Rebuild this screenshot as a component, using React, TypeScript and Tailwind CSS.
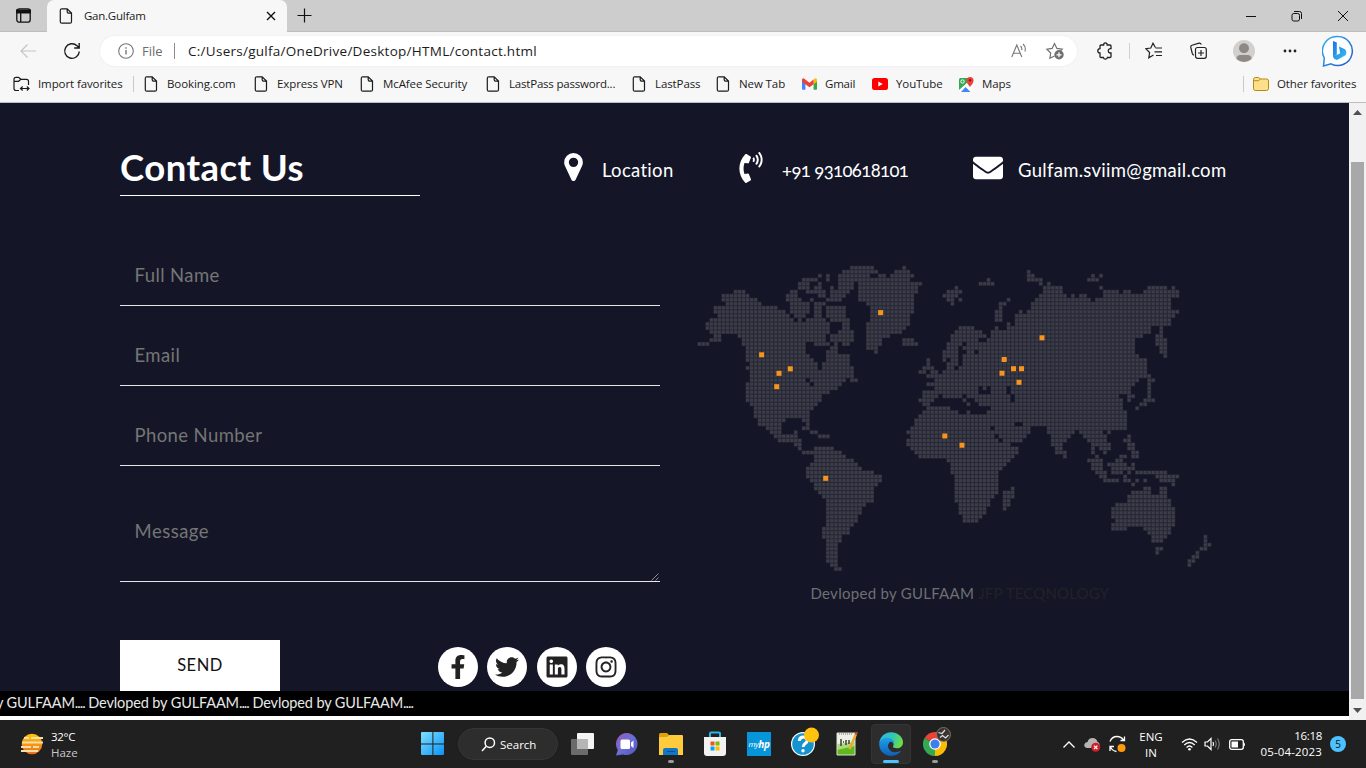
import React from "react";
import { FaFacebookF, FaTwitter, FaLinkedin, FaInstagram, FaPhoneVolume, FaEnvelope } from "react-icons/fa";

const UI = "font-['Open_Sans','Noto_Sans',sans-serif]";

// Land runs per map row: first and last dot of every run.
const LAND: string[] = [
  "485-547 643-643",
  "461-558 620-655 1016-1016",
  "390-390 414-414 450-535 570-582 607-665 1016-1028 1209-1209 1233-1233",
  "342-378 414-414 450-655 896-896 1016-1052 1195-1221",
  "330-354 390-390 450-485 509-690 872-908 1052-1052 1077-1077",
  "330-354 378-390 426-426 450-485 509-680 799-799 1065-1115 1233-1233 1375-1430 1450-1450",
  "135-163 306-318 354-402 426-473 509-680 775-811 1065-1115 1245-1284 1305-1320 1365-1432 1450-1465",
  "100-178 295-318 390-402 426-461 509-668 763-799 1052-1128 1149-1149 1172-1187 1245-1432 1450-1465",
  "100-200 295-330 366-366 414-450 509-668 775-787 811-811 956-956 1040-1197 1221-1440",
  "111-212 306-354 378-402 533-668 787-787 933-945 1028-1440",
  "76-260 306-354 378-390 414-461 545-668 933-933 1028-1440",
  "76-283 306-354 378-390 414-461 545-668 921-933 992-992 1016-1440 1450-1462",
  "88-295 318-342 378-390 414-467 545-655 921-933 980-1440 1450-1450",
  "64-306 330-330 354-402 426-473 545-655 921-933 980-1440",
  "52-414 461-473 533-655 956-956 980-1440",
  "52-414 461-473 533-640 810-850 921-921 956-1380 1415-1415",
  "64-414 450-485 533-635 799-872 910-1380 1415-1415",
  "76-90 147-402 426-438 450-485 533-600 787-882 905-1350 1403-1415",
  "64-90 158-402 426-438 450-485 533-570 643-668 787-860 895-1335 1403-1427",
  "28-52 158-342 378-402 414-414 438-438 461-473 533-570 643-680 775-811 830-1325 1403-1427",
  "170-342 426-438 533-558 775-805 828-1325 1415-1427",
  "170-342 414-438 558-558 763-800 830-850 872-1325 1415-1427",
  "170-354 414-473 763-800 820-1345 1427-1427",
  "170-366 414-473 714-714 763-763 787-805 828-1370",
  "182-378 402-473 714-714 775-800 820-1370",
  "170-378 402-485 702-726 775-787 811-1370",
  "182-485 690-702 726-738 763-1360",
  "182-485 714-726 738-1360 1379-1379",
  "182-342 366-461 485-497 738-1340 1379-1390",
  "170-354 378-450 714-1330 1379-1379",
  "170-426 438-438 738-860 885-885 905-945 970-995 1010-1320 1379-1379",
  "170-414 702-787 799-855 905-945 970-1315 1379-1379",
  "170-390 702-738 763-787 800-810 835-860 875-955 980-1280 1320-1330 1379-1379",
  "170-390 690-726 820-820 860-960 980-1290 1320-1320 1368-1390",
  "182-378 702-714 835-835 870-1295 1355-1365",
  "194-366 714-780 905-1295 1340-1340",
  "194-354 702-799 835-835 895-1308",
  "194-318 330-354 690-1308",
  "206-283 342-354 678-1300",
  "206-275 354-354 678-970 1000-1308",
  "230-270 342-354 667-900 915-1020 1075-1308",
  "242-270 318-318 366-378 655-905 925-1015 1078-1145 1170-1235 1258-1258",
  "254-318 390-414 667-910 935-1005 1090-1140 1185-1250 1318-1318",
  "266-330 655-920 940-990 1090-1125 1195-1250 1305-1318",
  "318-330 655-955 1090-1115 1207-1260 1320-1330",
  "330-330 378-426 667-950 970-982 1100-1115 1207-1207 1232-1260 1320-1330",
  "342-366 378-450 678-982 1100-1125 1207-1207 1245-1245 1330-1340",
  "378-461 690-970 1125-1125 1220-1220 1290-1305 1330-1340",
  "378-485 775-955 1195-1232 1283-1295",
  "366-497 787-945 1207-1235 1258-1310 1330-1330",
  "354-509 787-935 1207-1235 1270-1330",
  "354-545 787-925 1220-1245 1270-1295 1318-1318 1345-1425",
  "354-570 799-920 1232-1245 1305-1305 1400-1460",
  "366-570 799-920 1245-1283 1305-1318 1343-1343 1367-1367 1415-1448",
  "378-558 799-920 1330-1330 1450-1450",
  "378-545 799-920 968-968 1367-1380 1415-1425",
  "390-545 799-920 944-968 1330-1380 1415-1425",
  "402-545 799-905 944-968 1318-1430",
  "414-545 799-895 944-955 1318-1438",
  "414-521 811-895 944-955 1283-1438",
  "414-509 811-885 944-944 1270-1450",
  "414-509 811-885 1270-1450",
  "414-497 823-872 1270-1450",
  "414-497 823-860 1283-1450",
  "414-485 1270-1450",
  "402-473 1270-1305 1367-1438",
  "402-473 1380-1438",
  "402-450 1390-1425 1547-1547",
  "414-450 1390-1415 1547-1547",
  "414-438 1547-1558",
  "414-438 1403-1415 1535-1545",
  "414-438 1403-1403 1523-1523",
  "414-438 1510-1523",
  "414-438 1498-1510",
  "426-438 1498-1498",
  "438-450",
];

const PINS: [number, number][] = [
  [71.6, 99.8], [89, 118.3], [100.3, 113.8], [86.7, 131.7], [190.6, 57.6], [352, 82.8], [314.2, 104.5],
  [312, 118.2], [323.5, 113.7], [331.5, 113.7], [329, 127.3], [254.8, 181], [272, 190.2], [135.7, 223.3],
];

const PITCH = 12.05;

function WorldMap() {
  const dots: string[] = [];
  const base: string[] = [];
  LAND.forEach((row, r) => {
    const y = (38 + r * PITCH) / 3;
    row.split(" ").forEach((run) => {
      const [a, b] = run.split("-").map(Number);
      const from = Math.round((a - 28) / PITCH);
      const to = Math.round((b - 28) / PITCH);
      const x0 = (28 + from * PITCH) / 3 - 2;
      base.push(`M${x0.toFixed(2)} ${(y - 2).toFixed(2)}h${(((to - from + 1) * PITCH) / 3).toFixed(2)}v4.02H${x0.toFixed(2)}z`);
      for (let c = from; c <= to; c++) {
        const x = (28 + c * PITCH) / 3;
        dots.push(`M${(x - 1.5).toFixed(2)} ${(y - 1.5).toFixed(2)}h3v3h-3z`);
      }
    });
  });
  return (
    <svg width="540" height="320" viewBox="0 0 540 320" className="block">
      <path d={base.join("")} fill="#262735" />
      <path d={dots.join("")} fill="#3c3d48" />
      {PINS.map(([x, y], i) => (
        <rect key={i} x={x - 2.5} y={y - 2.5} width="5" height="5" fill="#f7941d" />
      ))}
    </svg>
  );
}

const PageIcon = () => (
  <svg width="14" height="16" viewBox="0 0 14 16" fill="none" stroke="#1b1b1b" strokeWidth="1.2" className="shrink-0">
    <path d="M2.8.8h5.4l4.3 4.3v8.6c0 1-.5 1.5-1.5 1.5H2.8c-1 0-1.5-.5-1.5-1.5V2.3c0-1 .5-1.500 1.500-1.500zM8.200.8v3c0 .9.4 1.300 1.300 1.300h3" />
  </svg>
);

function Fav({ icon, label, className }: { icon?: React.ReactNode; label: string; className: string }) {
  return (
    <div className={`flex h-full shrink-0 items-center whitespace-nowrap ${className}`}>
      {icon ?? <PageIcon />}
      <span className="ml-[9px]">{label}</span>
    </div>
  );
}

function Browser() {
  return (
    <header className={`h-[103px] border-b border-[#bdbdbd] bg-[#f7f7f7] text-[#1b1b1b] ${UI}`}>
      <div className="flex h-8 bg-[#cdcdcd]">
        <div className="flex w-[47px] items-center justify-center border-b border-[#bdbdbd]">
          <svg width="15" height="15" viewBox="0 0 15 15" fill="none" stroke="#111" strokeWidth="1.3">
            <rect x=".8" y=".8" width="13.400" height="13.400" rx="2.500" />
            <path d="M1 2.500h13v2H1z" fill="#111" strokeWidth="2" />
            <path d="M4.700 5v9" />
          </svg>
        </div>
        <div className="flex w-60 items-center rounded-t-[7px] bg-[#f7f7f7] pl-3">
          <PageIcon />
          <span className="ml-[11px] flex-1 text-[11.5px] tracking-[-0.25px]">Gan.Gulfam</span>
          <svg width="10" height="10" viewBox="0 0 10 10" stroke="#111" strokeWidth="1.4" className="mr-[11px]">
            <path d="M1 1l8 8M9 1l-8 8" />
          </svg>
        </div>
        <div className="flex flex-1 items-center border-b border-[#bdbdbd] pl-[10px]">
          <svg width="15" height="15" viewBox="0 0 15 15" stroke="#111" strokeWidth="1.200">
            <path d="M7.500.5v14M.5 7.500h14" />
          </svg>
          <svg width="104" height="12" viewBox="0 0 104 12" stroke="#111" fill="none" className="ml-auto mr-[17px]">
            <path d="M1 6.500h10" />
            <rect x="47" y="3.500" width="7.500" height="7.500" rx="1.800" />
            <path d="M49 1.500h5.500q2 0 2 2V9" />
            <path d="M93 1l10 10M103 1L93 11" />
          </svg>
        </div>
      </div>
      <div className="flex h-[37px] items-center">
        <svg width="16" height="14" viewBox="0 0 16 14" fill="none" stroke="#c4c4c4" strokeWidth="1.200" className="ml-5">
          <path d="M16 7H1M7.500.5L1 7l6.500 6.500" />
        </svg>
        <svg width="18" height="18" viewBox="0 0 18 18" fill="none" stroke="#1b1b1b" strokeWidth="1.400" className="ml-[27px]">
          <path d="M16.300 9.500A7.300 7.300 0 1 1 14 3.700L16 5.700M16.200 1v5h-5" />
        </svg>
        <div className="ml-[19px] flex h-[30px] w-[977px] items-center rounded-full bg-white pl-[18px] shadow-[0_0_2px_#e4e4e4]">
          <svg width="16" height="16" viewBox="0 0 16 16" fill="none" stroke="#777" strokeWidth="1.100">
            <circle cx="8" cy="8" r="7.300" />
            <path d="M8 7v4.500M8 4.300v1.400" strokeWidth="1.400" />
          </svg>
          <span className="ml-2 w-[23px] pt-0.5 text-[13px] text-[#6b6b6b]">File</span>
          <span className="ml-[9px] h-4 w-px bg-[#8b8b8b]" />
          <span className="ml-[13px] flex-1 pt-px text-[13.500px] tracking-[0.27px] whitespace-nowrap">C:/Users/gulfa/OneDrive/Desktop/HTML/contact.html</span>
          <svg width="17" height="16" viewBox="0 0 17 16" fill="none" stroke="#777" strokeWidth="1.100">
            <path d="M.8 14L5.800 2l5 12M2.400 10.200h6.800M9.500 3q1.800 1.700 1.200 4.200M12 1q3.300 3 1.900 7.500" />
          </svg>
          <svg width="19" height="18" viewBox="0 0 19 18" className="ml-[18px] mr-3" fill="none" stroke="#6f6f6f" strokeWidth="1.200">
            <path d="M8.500 14l-4.600 2.300.8-5.300-3.900-3.800 5.300-.8L8.500 1.500l2.400 4.900 5.300.8-1.500 1.500" />
            <circle cx="13" cy="12.800" r="4.700" fill="#6f6f6f" stroke="none" />
            <path d="M13 10.300v5M10.500 12.800h5" stroke="#fff" />
          </svg>
        </div>
        <svg width="17" height="18" viewBox="0 0 17 18" fill="none" stroke="#222" strokeWidth="1.300" className="ml-[20px]">
          <path d="M4 3h2.600q0-2.200 1.800-2.200T10.200 3H13q1 0 1 1v2.600h-1q-1.800.3-1.800 2.200t1.800 2.200h1v3.500q0 1-1 1h-2.600q-.3 1.700-2 1.700t-2-1.700H4q-1 0-1-1V11Q.8 11 .8 8.800T3 6.600V4q0-1 1-1z" />
        </svg>
        <span className="ml-[15px] h-4 w-px bg-[#d0d0d0]" />
        <svg width="18" height="17" viewBox="0 0 18 17" fill="none" stroke="#222" strokeWidth="1.200" className="ml-[15px]">
          <path d="M8.500 13l-4.700 2.800.8-5.300-3.800-3.800 5-.7L8 1.200l2.400 4.300M10.500 6H17M9.500 9.800H17M11 13.500h6" />
        </svg>
        <svg width="17" height="18" viewBox="0 0 17 18" fill="none" stroke="#222" strokeWidth="1.200" className="ml-[27px]">
          <rect x="5.500" y="5.500" width="10.800" height="10.800" rx="2" />
          <path d="M11 8v6M8 11h6M4 13Q2.800 13 2.300 11.500L.8 5.500Q.4 3.700 2 3.200L9 1.100q1.600-.4 2.300 1.400" />
        </svg>
        <svg width="22" height="22" viewBox="0 0 22 22" className="ml-[26px]">
          <circle cx="11" cy="11" r="11" fill="#d2d0ce" />
          <circle cx="11" cy="8.200" r="5" fill="#8e8986" />
          <path d="M3.500 19q0-4 4-4h7q4 0 4 4A11 11 0 0 1 3.500 19z" fill="#8e8986" />
        </svg>
        <svg width="14" height="4" viewBox="0 0 14 4" fill="#222" className="ml-7">
          <circle cx="2" cy="2" r="1.400" /><circle cx="7" cy="2" r="1.400" /><circle cx="12" cy="2" r="1.400" />
        </svg>
        <svg width="32" height="32" viewBox="0 0 32 32" className="ml-[25px]">
          <defs>
            <linearGradient id="bg" x1="0" y1="0" x2="1" y2="1"><stop stopColor="#2fb4f0" /><stop offset="1" stopColor="#1f55cf" /></linearGradient>
            <linearGradient id="bb" x1="0" y1="0" x2="1" y2="1"><stop stopColor="#1a73e8" /><stop offset="1" stopColor="#37c3f1" /></linearGradient>
          </defs>
          <path d="M16 1.500A14.500 14.500 0 1 1 9 28.800L1.500 31l.8-8A14.500 14.500 0 0 1 16 1.500z" fill="#fff" stroke="url(#bg)" strokeWidth="1.500" />
          <path d="M11 6l3.800 1.400v12.300L11 22zM17 11.500l6 2.700q2.500 2.800.5 6L15 25q-3-.5-4-3l7.200-3.800z" fill="url(#bb)" />
        </svg>
      </div>
      <div className="flex h-[30px] items-center text-[11.500px] tracking-[-0.1px]">
        <Fav className="w-[131px] pl-[13px]" label="Import favorites" icon={
          <svg width="17" height="16" viewBox="0 0 17 16" fill="none" stroke="#1b1b1b" strokeWidth="1.200" className="-mr-px shrink-0">
            <path d="M6 14.500H3q-2 0-2-2V3.300q0-2 2-2h2.500L8 3.300h5.500q2 0 2 2V9M1 5.300h4.500l2.500-2M7.500 12.500h8.500M9.700 10.500l-2.200 2 2.200 2M13.800 10.500l2.200 2-2.200 2" />
          </svg>} />
        <span className="ml-[2px] h-4 w-px bg-[#c9c9c9]" />
        <Fav className="w-[110px] pl-[10px]" label="Booking.com" />
        <Fav className="w-[106px] pl-[10px]" label="Express VPN" />
        <Fav className="w-[126px] pl-[10px]" label="McAfee Security" />
        <Fav className="w-[146px] pl-[10px] tracking-[-0.2px]" label="LastPass password..." />
        <Fav className="w-[84px] pl-[10px]" label="LastPass" />
        <Fav className="w-[96px] pl-[10px]" label="New Tab" />
        <Fav className="w-[70px] tracking-[-0.2px]" label="Gmail" icon={
          <svg width="15" height="12" viewBox="0 0 15 12" className="-mr-px shrink-0">
            <path d="M0 2v9q0 .8.800.8h2.600V4z" fill="#4285f4" /><path d="M15 2v9q0 .8-.8.8h-2.600V4z" fill="#34a853" />
            <path d="M11.600 1.500L13 .5q2-.6 2 1.600v1.600l-3.400 2.500z" fill="#fbbc04" /><path d="M0 2.100Q0-.100 2 .5l5.500 4.300L11.600 1.500v4.700L7.500 9.300 0 3.700z" fill="#ea4335" />
          </svg>} />
        <Fav className="w-[87px]" label="YouTube" icon={
          <svg width="16" height="12" viewBox="0 0 16 12" className="-mr-px shrink-0"><rect width="16" height="12" rx="2.500" fill="#f00" /><path d="M6.300 3.500v5L10.700 6z" fill="#fff" /></svg>} />
        <Fav className="w-[90px]" label="Maps" icon={
          <svg width="15" height="15" viewBox="0 0 15 15" className="-mr-px shrink-0">
            <rect y="1" width="13" height="14" rx="1.500" fill="#34a853" /><path d="M0 13L10 4l3 3v8H0z" fill="#fff" /><path d="M2 15l4.500-5 5 5z" fill="#4285f4" />
            <circle cx="3.500" cy="4.500" r="1.700" stroke="#fff" fill="none" />
            <path d="M11 0q3.500 0 3.500 3.500 0 2.500-3.500 6.500-3.500-4-3.500-6.500Q7.500 0 11 0z" fill="#ea4335" /><circle cx="11" cy="3.300" r="1.200" fill="#8c1a11" />
          </svg>} />
        <span className="ml-auto h-4 w-px bg-[#c9c9c9]" />
        <Fav className="w-[122px] pl-[10px]" label="Other favorites" icon={
          <svg width="16" height="14" viewBox="0 0 16 14" className="-mr-px -ml-px shrink-0" stroke="#b58a12">
            <path d="M2.500.5h3L7.500 2H13.500q2 0 2 2v7.500q0 2-2 2h-11q-2 0-2-2v-9q0-2 2-2z" fill="#ffe08a" /><path d="M1 3.700h4.500l2-1.700" fill="none" />
          </svg>} />
      </div>
    </header>
  );
}

function Field({ label, className }: { label: string; className: string }) {
  return (
    <div className={`flex items-center border-b border-[#e6e6ea] pl-[14.500px] text-[18.500px] tracking-[0.4px] text-[#757575] ${className}`}>
      <span>{label}</span>
    </div>
  );
}

const SOCIAL = [FaFacebookF, FaTwitter, FaLinkedin, FaInstagram];

function ContactPage() {
  return (
    <main className="flex h-[588px] w-[1349px] flex-col overflow-hidden bg-[#141628] font-['Lato',sans-serif] text-white">
      <div className="flex pl-[120px]">
        <h1 className="mt-[42px] h-[51px] w-[300px] border-b border-white text-[36.500px] leading-[44px] font-bold tracking-[0.450px]">Contact Us</h1>
        <div className="mt-[48px] ml-[144px] flex h-9 items-center text-[18.500px] whitespace-nowrap">
          <svg width="19" height="28" viewBox="0 -1408 1024 1536" fill="#fff" className="-mt-1">
            <g transform="scale(1,-1)">
              <path d="M768 896q0 106 -75 181t-181 75t-181 -75t-75 -181t75 -181t181 -75t181 75t75 181zM1024 896q0 -109 -33 -179l-364 -774q-16 -33 -47.500 -52t-67.500 -19t-67.500 19t-46.500 52l-365 774q-33 70 -33 179q0 212 150 362t362 150t362 -150t150 -362z" />
            </g>
          </svg>
          <span className="mt-1 ml-[19px] w-[137px] tracking-[0.3px]">Location</span>
          <FaPhoneVolume className="-mt-1 h-[31px] w-6" />
          <span className="mt-1 ml-[19px] w-[190px] tracking-[-0.6px] oldstyle-nums">+91 9310618101</span>
          <FaEnvelope className="-mt-0.5 ml-px size-[30px]" />
          <span className="mt-1 ml-[15px] tracking-[0.3px]">Gulfam.sviim@gmail.com</span>
        </div>
      </div>
      <div className="flex flex-1 pl-[120px]">
        <div className="w-[540px]">
          <Field label="Full Name" className="mt-[50px] h-[60px]" />
          <Field label="Email" className="mt-5 h-[60px]" />
          <Field label="Phone Number" className="mt-5 h-[60px]" />
          <div className="mt-5 flex h-[96px] items-end justify-between border-b border-[#e6e6ea]">
            <span className="pb-[36px] pl-[14.500px] text-[18.500px] leading-[27px] tracking-[0.5px] text-[#757575]">Message</span>
            <svg width="9" height="9" viewBox="0 0 9 9" stroke="#aaa" strokeWidth=".8"><path d="M.5 8.500l7-7M4.500 8.500l3-3" /></svg>
          </div>
          <div className="mt-[58px] flex items-start">
            <div className="flex h-[51px] w-40 items-center justify-center bg-white text-[16.500px] tracking-[0.5px] text-[#111]">SEND</div>
            <div className="mt-[7px] ml-[158px] flex gap-[9.400px]">
              {SOCIAL.map((Icon, i) => (
                <span key={i} className="flex size-10 items-center justify-center rounded-full bg-white text-[#222]">
                  <Icon size={24} />
                </span>
              ))}
            </div>
          </div>
        </div>
        <div className="ml-[30px] w-[540px] pt-[59px]">
          <WorldMap />
          <p className="mt-[8px] ml-[120.500px] text-[15px] leading-5 tracking-[0.280px] whitespace-nowrap text-[#6f6f72]">
            Devloped by GULFAAM <span className="tracking-[0.150px] text-[#222225]">JFP TECQNOLOGY</span>
          </p>
        </div>
      </div>
    </main>
  );
}

function Scrollbar() {
  return (
    <aside className="flex h-[617px] w-[17px] flex-col items-center bg-[#f1f1f1]">
      <svg width="9" height="5" viewBox="0 0 9 5" fill="#505050" className="mt-[7px]"><path d="M0 5l4.500-5L9 5z" /></svg>
      <div className="mt-[47px] h-[537px] w-[13px] bg-[#a8a8a8]" />
      <svg width="9" height="5" viewBox="0 0 9 5" fill="#505050" className="mt-[9px]"><path d="M0 0l4.500 5L9 0z" /></svg>
    </aside>
  );
}

function Taskbar() {
  return (
    <footer className={`flex h-12 items-center bg-[#202020] text-white ${UI}`}>
      <svg width="25" height="22" viewBox="0 0 25 22" className="ml-5">
        <defs><linearGradient id="sun" x1="0" y1="0" x2="0" y2="1"><stop stopColor="#ffc60a" /><stop offset="1" stopColor="#f26a1b" /></linearGradient></defs>
        <circle cx="12" cy="11" r="10.300" fill="url(#sun)" />
        <path d="M4 5h5M11 5h12M2 9.500h21M1 14h10M13 14h6M1 18h17" stroke="#f3dfaa" strokeWidth="1.800" />
      </svg>
      <div className="ml-[6px] w-[370px] pt-0.5 text-[11.500px] leading-4">
        <div className="tracking-[-0.3px]">32°C</div>
        <div className="text-[#c9c9c9]">Haze</div>
      </div>
      <svg width="24" height="24" viewBox="0 0 24 24">
        <defs><linearGradient id="win" x1="0" y1="0" x2="1" y2="1"><stop stopColor="#7fe0ff" /><stop offset="1" stopColor="#0a93f5" /></linearGradient></defs>
        <path d="M0 1q0-1 1-1h10.400v11.400H0zM12.400 0H22q1 0 1 1v10.400H12.400zM0 12.400h11.400V23H1q-1 0-1-1zM12.400 12.400H23V22q0 1-1 1h-9.600z" fill="url(#win)" />
      </svg>
      <div className="ml-[13px] flex h-8 w-[100px] items-center rounded-full border border-[#353535] bg-[#2d2d2d] pl-[22px]">
        <svg width="15" height="15" viewBox="0 0 15 15" fill="none" stroke="#fff" strokeWidth="1.500"><circle cx="8.800" cy="5.700" r="4.700" /><path d="M5.300 9.300L1 14" /></svg>
        <span className="ml-1 pt-px text-[11.500px]">Search</span>
      </div>
      <svg width="24" height="23" viewBox="0 0 24 23" className="ml-[13px]">
        <rect y="6" width="17" height="16" rx="1" fill="#6b6b6b" /><rect x="6" width="17" height="16" rx="1" fill="#f4f4f4" /><path d="M6 6h11v10H6z" fill="#b5b5b5" />
      </svg>
      <svg width="24" height="24" viewBox="0 0 24 24" className="ml-5">
        <defs><linearGradient id="chat" x1="0" y1="0" x2="1" y2="1"><stop stopColor="#9b59b0" /><stop offset=".5" stopColor="#6a6fd8" /><stop offset="1" stopColor="#4f52b8" /></linearGradient></defs>
        <path d="M12 1a11 11 0 1 1-4 21.400L1 23.500l1.800-5.500A11 11 0 0 1 12 1z" fill="url(#chat)" />
        <rect x="5.500" y="7.500" width="9.500" height="9.500" rx="1.500" fill="#fff" /><path d="M16 10.500l2.500-2v7.500L16 14z" fill="#fff" />
      </svg>
      <div className="ml-5 flex h-full w-6 flex-col items-center pt-[12px]">
        <svg width="24" height="24" viewBox="0 0 24 24">
          <path d="M0 2.500q0-1.500 1.500-1.500H8l2.500 2.500H22v5H0z" fill="#e3a008" /><path d="M0 6q0-1 1-1h7l2.500-2H23q1 0 1 1v19H0z" fill="#ffcb3d" /><path d="M4 23v-5q0-2 2-2h11q2 0 2 2v5z" fill="#0f76c8" /><path d="M8 19.500h8" stroke="#0a4f8f" />
        </svg>
        <span className="mt-[4px] h-[3px] w-[6px] rounded-full bg-[#9a9a9a]" />
      </div>
      <svg width="24" height="26" viewBox="0 0 24 26" className="ml-5">
        <path d="M7 7V2.500q0-1 1-1h8q1 0 1 1V7" fill="none" stroke="#28b4e8" strokeWidth="2" /><path d="M1 6h22v16q0 3-3 3H4q-3 0-3-3z" fill="#f2f2f2" />
        <path d="M7.500 10.500h4v4h-4z" fill="#f25022" /><path d="M12.500 10.500h4v4h-4z" fill="#7fba00" /><path d="M7.500 15.500h4v4h-4z" fill="#00a4ef" /><path d="M12.500 15.500h4v4h-4z" fill="#ffb900" />
      </svg>
      <div className="ml-[20px] flex size-6 items-center justify-center bg-[#0795d9] text-[8px] tracking-[-0.4px] italic">my<b className="text-[10px]">hp</b></div>
      <svg width="30" height="30" viewBox="0 0 30 30" className="ml-[19px] -mt-[5px]">
        <circle cx="13" cy="17" r="12" fill="#fff" /><circle cx="13" cy="17" r="10.800" fill="#1493d1" />
        <path d="M9.300 14q.3-4 4-4t3.900 3.200q0 2-2 3.300-2 1.300-2 3.500" fill="none" stroke="#fff" strokeWidth="3" /><circle cx="13" cy="23.700" r="1.700" fill="#fff" /><circle cx="21.500" cy="8" r="7.500" fill="#ffc20e" />
      </svg>
      <svg width="24" height="26" viewBox="0 0 24 26" className="ml-[15px]">
        <path d="M2 2h18v22H2z" fill="#edf2e5" /><path d="M2 17l18-4v11H2z" fill="#5fb91a" /><path d="M2 13l18-2v4L2 19z" fill="#a9d97c" /><path d="M2 2h18v22H2z" fill="none" stroke="#d9dfcf" />
        <path d="M4 3h14" stroke="#777" strokeDasharray="1 1" /><path d="M6 8v7M8 11h1M11 9v5M14 9v4" stroke="#333" strokeWidth="1.400" /><path d="M21 3L14.500 18" stroke="#eaae34" strokeWidth="2.500" /><path d="M21.800 1l-1 2.500" stroke="#b84c3c" strokeWidth="2.500" />
      </svg>
      <div className="ml-[12px] flex h-10 w-10 flex-col items-center rounded-[4px] border border-[#343434] bg-[#2d2d2d] pt-[7px]">
        <svg width="24" height="24" viewBox="0 0 24 24">
          <defs>
            <linearGradient id="e1" x1="0" y1="0" x2="1" y2=".3"><stop stopColor="#2cb5ee" /><stop offset=".6" stopColor="#32c7b0" /><stop offset="1" stopColor="#68dc4f" /></linearGradient>
            <linearGradient id="e2" x1="0" y1="0" x2="0" y2="1"><stop stopColor="#1fa0e8" /><stop offset="1" stopColor="#0d5eb8" /></linearGradient>
          </defs>
          <path d="M.3 10.500C1.500 4.500 6 .3 12 .3c6.600 0 12 4.600 12 10 0 4-3 6-6 6-2.800 0-4.300-1-4-2 1.300-1 .9-5.600-4.400-5.600C5.500 8.700 2 9 .3 10.500z" fill="url(#e1)" />
          <path d="M.2 12.500C.2 8 4 5.800 8.200 5.800c4.800 0 7.300 3.400 7 6.500-.5-1.600-2-2.600-4-2.600-2.600 2-3 5-1 7.700 2.500 3.300 7.500 3.700 12 1.400C20 22 16.500 24 12.300 24 5.500 24 .2 18.800.2 12.500z" fill="url(#e2)" />
        </svg>
        <span className="mt-[4px] h-[3px] w-4 rounded-full bg-[#4cc2ff]" />
      </div>
      <div className="ml-[12px] flex h-full w-[30px] flex-col pt-[7px]">
        <svg width="30" height="29" viewBox="0 0 30 29">
          <path d="M12 17L1.600 11A12 12 0 0 1 22.400 11z" fill="#ea4335" /><path d="M12 17L1.600 11A12 12 0 0 0 12 29l5-9z" fill="#34a853" /><path d="M12 17l10.400-6A12 12 0 0 1 12 29z" fill="#fbbc04" />
          <circle cx="12" cy="17" r="5.800" fill="#fff" /><circle cx="12" cy="17" r="4.600" fill="#3a7ff0" />
          <circle cx="20.500" cy="7.500" r="7" fill="#3b3331" stroke="#8a807c" strokeWidth=".8" /><path d="M15.500 5.500l3.500 1 3-3.500M17 10.500l2.500-2 3 2.500 3-3" stroke="#e4e0de" strokeWidth="1.200" fill="none" />
        </svg>
        <span className="mt-[4px] ml-[9px] h-[3px] w-[6px] rounded-full bg-[#9a9a9a]" />
      </div>
      <div className="ml-auto flex h-full items-center">
        <svg width="12" height="7" viewBox="0 0 12 7" fill="none" stroke="#fff" strokeWidth="1.300"><path d="M.5 6.500L6 1l5.500 5.500" /></svg>
        <svg width="17" height="15" viewBox="0 0 17 15" className="ml-[9px]">
          <path d="M3 11Q0 10.500.3 7.500.8 5 3.500 5 4.500 1 8.500 1t5 4q2.500.7 2 4l-1 2z" fill="#b5b5b5" /><circle cx="11.700" cy="10.300" r="4.500" fill="#d11d2a" /><path d="M10 8.600l3.400 3.400M13.400 8.600L10 12" stroke="#fff" strokeWidth="1.200" />
        </svg>
        <svg width="17" height="18" viewBox="0 0 17 18" className="ml-[8px]" fill="none" stroke="#fff" strokeWidth="1.300">
          <path d="M1 6.500Q3 1.500 8 1.500q4 0 6.500 3.500M15.500 1.500V5.500h-4M1 16v-4.500h4M1.500 12q2 4 6 4.500" /><circle cx="12.500" cy="13" r="4" fill="#ff9a0a" stroke="none" />
        </svg>
        <div className="ml-[7px] w-[36px] pt-0.5 text-center text-[11.500px] leading-4"><div>ENG</div><div>IN</div></div>
        <svg width="17" height="13" viewBox="0 0 17 13" className="ml-[12px]" fill="none" stroke="#fff" strokeWidth="1.300">
          <path d="M1 4.500q7.500-7 15 0M3.300 7q5.200-5 10.400 0M5.600 9.400q2.900-2.700 5.800 0" /><circle cx="8.500" cy="11.300" r="1.300" fill="#fff" stroke="none" />
        </svg>
        <svg width="17" height="14" viewBox="0 0 17 14" className="ml-[6px]" fill="none" stroke="#fff" strokeWidth="1.200">
          <path d="M1 5h2.500L7 1.500v11L3.500 9H1zM9 5q1 2 0 4" /><path d="M11 3.500q2.500 3.500 0 7M13.500 1.500q3.500 5.500 0 11" stroke="#777" />
        </svg>
        <svg width="17" height="11" viewBox="0 0 17 11" className="ml-[8px]"><rect x=".7" y=".7" width="13.600" height="9.600" rx="2" fill="none" stroke="#fff" strokeWidth="1.300" /><path d="M2.500 2.500H9v6H2.500z" fill="#fff" /><path d="M15 3.500q2 2 0 4z" fill="#fff" /></svg>
        <div className="ml-[8px] w-[68px] text-right text-[11.500px] leading-4 whitespace-nowrap"><div className="tracking-[-0.3px]">16:18</div><div className="tracking-[0.15px]">05-04-2023</div></div>
        <span className="mr-5 ml-[8px] flex size-4 items-center justify-center rounded-full bg-[#4cc2ff] text-[10px] text-[#111]">5</span>
      </div>
    </footer>
  );
}

export default function App() {
  return (
    <div className="flex h-[768px] w-[1366px] flex-col overflow-hidden bg-white">
      <Browser />
      <div className="flex h-[617px]">
        <div className="flex w-[1349px] flex-col">
          <ContactPage />
          <div className="flex h-[25px] items-center overflow-hidden bg-black pb-0.5 font-['Lato',sans-serif] text-[14.500px] tracking-[-0.130px] whitespace-nowrap text-[#e8e8e8]">
            <span className="-ml-[4px]">
              y GULFAAM<span className="tracking-[-0.950px]">....</span> Devloped by GULFAAM<span className="tracking-[-0.950px]">....</span> Devloped by GULFAAM<span className="tracking-[-0.950px]">....</span>
            </span>
          </div>
        </div>
        <Scrollbar />
      </div>
      <Taskbar />
    </div>
  );
}
